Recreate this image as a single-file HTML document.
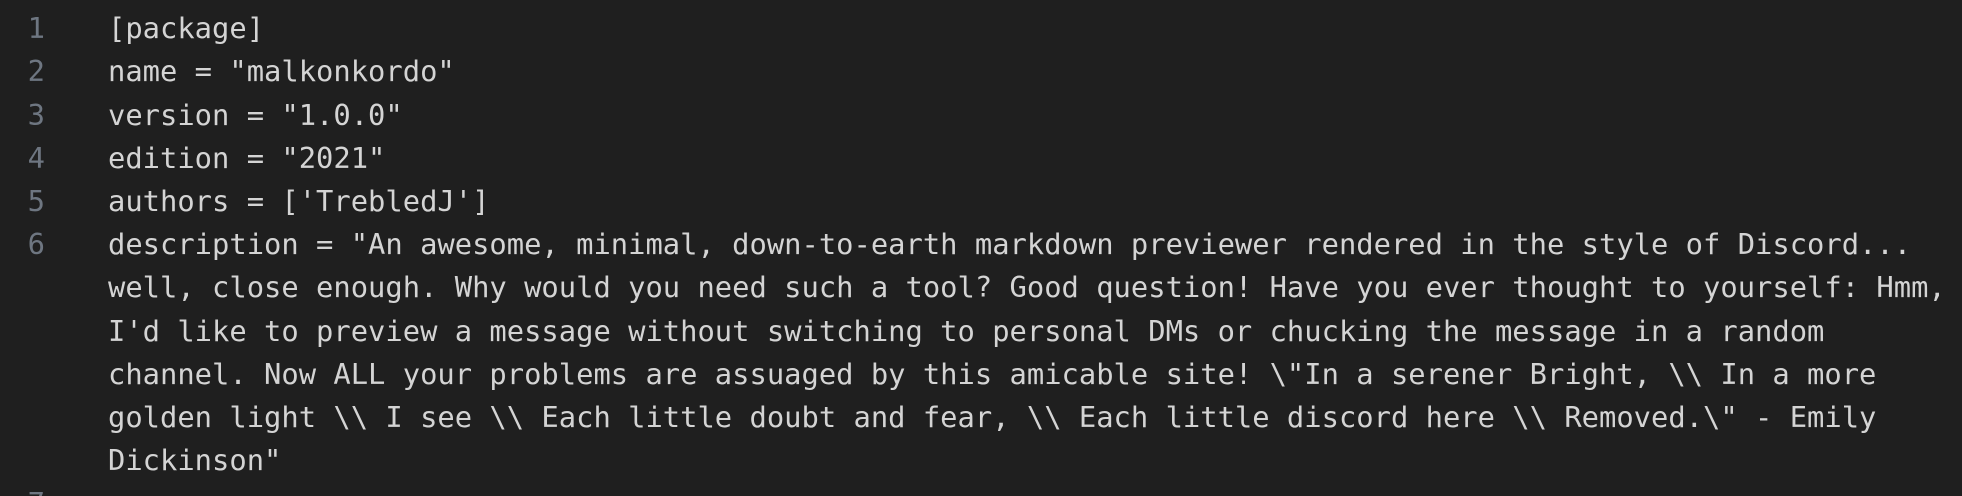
<!DOCTYPE html>
<html><head><meta charset="utf-8"><style>
html,body{margin:0;padding:0;background:#1f1f1f;width:1962px;height:496px;overflow:hidden}
#w{position:relative;width:1962px;height:496px;overflow:hidden}
.l{position:absolute;left:0;height:43.2px;line-height:43.2px;font-family:"DejaVu Sans Mono","Liberation Mono",monospace;font-size:28.8px;white-space:pre}
.n{position:absolute;width:45px;text-align:right;color:#6e7681}
.t{position:absolute;left:108px;color:#d4d4d4}
</style></head><body><div id="w">
<div class="l" style="top:7px"><span class="n">1</span><span class="t">[package]</span></div>
<div class="l" style="top:50px"><span class="n">2</span><span class="t">name = "malkonkordo"</span></div>
<div class="l" style="top:93.5px"><span class="n">3</span><span class="t">version = "1.0.0"</span></div>
<div class="l" style="top:136.5px"><span class="n">4</span><span class="t">edition = "2021"</span></div>
<div class="l" style="top:180px"><span class="n">5</span><span class="t">authors = ['TrebledJ']</span></div>
<div class="l" style="top:223px"><span class="n">6</span><span class="t">description = "An awesome, minimal, down-to-earth markdown previewer rendered in the style of Discord...</span></div>
<div class="l" style="top:266px"><span class="t">well, close enough. Why would you need such a tool? Good question! Have you ever thought to yourself: Hmm,</span></div>
<div class="l" style="top:309.5px"><span class="t">I'd like to preview a message without switching to personal DMs or chucking the message in a random</span></div>
<div class="l" style="top:352.5px"><span class="t">channel. Now ALL your problems are assuaged by this amicable site! \"In a serener Bright, \\ In a more</span></div>
<div class="l" style="top:396px"><span class="t">golden light \\ I see \\ Each little doubt and fear, \\ Each little discord here \\ Removed.\" - Emily</span></div>
<div class="l" style="top:439px"><span class="t">Dickinson"</span></div>
<div style="position:absolute;left:0;top:482px;width:60px;height:14px;overflow:hidden"><div class="l" style="top:0"><span class="n">7</span></div></div>
</div></body></html>
